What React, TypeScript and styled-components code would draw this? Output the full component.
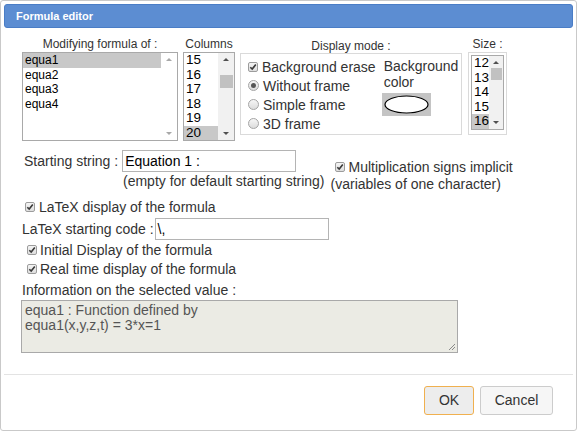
import React from 'react';
import styled, { createGlobalStyle, css } from 'styled-components';

// Formula editor dialog: formula list, columns/size pickers, display mode, options

const GlobalStyle = createGlobalStyle`
  html, body {
    margin: 0;
    padding: 0;
    background: #ffffff;
  }
  body {
    font-family: "Liberation Sans", Arial, sans-serif;
    color: #333333;
  }
  * { box-sizing: border-box; }
`;

const Dialog = styled.div`
  width: 577px;
  height: 431px;
  border: 1px solid #c9c9c9;
  border-radius: 3px;
  padding: 3px;
  background: #ffffff;
  display: flex;
  flex-direction: column;
`;

const TitleBar = styled.div`
  height: 24px;
  background: #5c8dd2;
  border: 1px solid #4a7dc6;
  border-radius: 3px;
  color: #ffffff;
  font-weight: 700;
  font-size: 11px;
  line-height: 22px;
  padding-left: 11px;
`;

const Body = styled.div`
  padding: 0 0 0 18px;
`;

const TopRow = styled.div`
  display: flex;
  align-items: flex-start;
  margin-top: 9px;
`;

const Group = styled.div<{ $gap?: number; $labelTop?: number }>`
  display: flex;
  flex-direction: column;
  align-items: center;
  margin-left: ${({ $gap }) => $gap ?? 0}px;
  padding-top: ${({ $labelTop }) => $labelTop ?? 0}px;
`;

const GroupLabel = styled.div<{ $lh?: number }>`
  font-size: 12px;
  line-height: ${({ $lh }) => $lh ?? 15}px;
  color: #333333;
  white-space: nowrap;
`;

const ListBox = styled.div<{ $w: number; $h: number }>`
  width: ${({ $w }) => $w}px;
  height: ${({ $h }) => $h}px;
  border: 1px solid #a9a9a9;
  background: #ffffff;
  display: flex;
  overflow: hidden;
`;

const ListItems = styled.div`
  flex: 1;
  display: flex;
  flex-direction: column;
`;

const ListItem = styled.div<{ $selected?: boolean; $size: number }>`
  height: 14.5px;
  line-height: 14.5px;
  font-size: ${({ $size }) => $size}px;
  color: #000000;
  padding-left: 2px;
  white-space: nowrap;
  background: ${({ $selected }) => ($selected ? '#c8c8c8' : 'transparent')};
`;

const ScrollBar = styled.div<{ $w: number; $active?: boolean }>`
  width: ${({ $w }) => $w}px;
  display: flex;
  flex-direction: column;
  align-items: center;
  justify-content: space-between;
  background: ${({ $active }) => ($active ? '#f1f1f1' : '#ffffff')};
  padding: 5px 0 5px;
`;

const Arrow = styled.span<{ $dir: 'up' | 'down'; $active?: boolean }>`
  width: 0;
  height: 0;
  border-left: 3px solid transparent;
  border-right: 3px solid transparent;
  ${({ $dir, $active }) =>
    $dir === 'up'
      ? css`border-bottom: 3px solid ${$active ? '#505050' : '#a8a8a8'};`
      : css`border-top: 3px solid ${$active ? '#505050' : '#a8a8a8'};`}
`;

const ScrollTrack = styled.div`
  flex: 1;
  width: 100%;
  position: relative;
`;

const Thumb = styled.div<{ $top: number; $h: number }>`
  position: absolute;
  left: 2px;
  right: 1px;
  top: ${({ $top }) => $top}px;
  height: ${({ $h }) => $h}px;
  background: #c1c1c1;
`;

const ModeBox = styled.div`
  width: 222px;
  height: 82px;
  border: 1px solid #dadada;
  padding: 3px 0 0 7px;
  display: flex;
`;

const ModeColumn = styled.div`
  display: flex;
  flex-direction: column;
`;

const ModeRow = styled.div`
  display: flex;
  align-items: center;
  height: 19px;
  font-size: 14px;
  color: #333333;
  white-space: nowrap;
`;

const ColorColumn = styled.div`
  display: flex;
  flex-direction: column;
  margin-left: 8px;
  padding-top: 1px;
  font-size: 14px;
  line-height: 16px;
  color: #333333;
`;

const Swatch = styled.div`
  width: 49px;
  height: 23px;
  margin-top: 3px;
  margin-left: -2px;
  background: #c4c4c4;
  display: flex;
  align-items: center;
  justify-content: center;
`;

const SizeFrame = styled.div`
  width: 39px;
  height: 83px;
  border: 1px solid #dadada;
  padding: 2px;
`;

const CheckBoxBox = styled.span<{ $gap?: number }>`
  width: 10px;
  height: 10px;
  flex: none;
  border: 1px solid #9c9c9c;
  border-radius: 2px;
  background: linear-gradient(#f4f4f4, #dedede);
  margin-right: ${({ $gap }) => $gap ?? 4}px;
  display: inline-flex;
  align-items: center;
  justify-content: center;
`;

const RadioCircle = styled.span<{ $on?: boolean }>`
  width: 11px;
  height: 11px;
  flex: none;
  border: 1px solid #a4a4a4;
  border-radius: 50%;
  background: linear-gradient(#f6f6f6, #dcdcdc);
  margin-right: 4px;
  display: inline-flex;
  align-items: center;
  justify-content: center;
  &::after {
    content: '';
    width: 5px;
    height: 5px;
    border-radius: 50%;
    background: ${({ $on }) => ($on ? '#555555' : 'transparent')};
  }
`;

const Text = styled.span`
  font-size: 14px;
  color: #333333;
  white-space: nowrap;
`;

const StartRow = styled.div`
  display: flex;
  margin-top: 9px;
  margin-left: 2px;
`;

const StartLeft = styled.div`
  display: flex;
  flex-direction: column;
`;

const InlineRow = styled.div<{ $mt?: number; $ml?: number; $h?: number }>`
  display: flex;
  align-items: center;
  margin-top: ${({ $mt }) => $mt ?? 0}px;
  margin-left: ${({ $ml }) => $ml ?? 0}px;
  height: ${({ $h }) => ($h ? `${$h}px` : 'auto')};
  font-size: 14px;
  color: #333333;
  white-space: nowrap;
`;

const TextInput = styled.div<{ $w: number; $ml: number }>`
  width: ${({ $w }) => $w}px;
  height: 22px;
  margin-left: ${({ $ml }) => $ml}px;
  border: 1px solid #b4b4b4;
  background: #ffffff;
  font-size: 14px;
  line-height: 20px;
  color: #000000;
  padding-left: 2px;
`;

const Hint = styled.div`
  margin-left: 99px;
  font-size: 14px;
  line-height: 18px;
  color: #333333;
  white-space: nowrap;
`;

const MultBlock = styled.div`
  display: flex;
  flex-direction: column;
  margin-left: 6px;
  margin-top: 8px;
  font-size: 14px;
  color: #333333;
  white-space: nowrap;
`;

const InfoLabel = styled.div`
  margin-top: 3px;
  font-size: 14px;
  line-height: 19px;
  color: #333333;
`;

const InfoArea = styled.div`
  position: relative;
  width: 437px;
  height: 53px;
  margin-left: -1px;
  border: 1px solid #a9a9a9;
  background: #ebebe4;
  padding: 2px 0 0 3px;
  font-size: 14px;
  line-height: 15px;
  color: #555555;
`;

const Grip = styled.svg`
  position: absolute;
  right: 1px;
  bottom: 1px;
`;

const Separator = styled.div`
  height: 1px;
  background: #e3e3e3;
  margin-top: 21px;
`;

const ButtonRow = styled.div`
  display: flex;
  justify-content: flex-end;
  gap: 6px;
  margin-top: 11px;
  padding-right: 20px;
`;

const Button = styled.div<{ $primary?: boolean; $w: number }>`
  width: ${({ $w }) => $w}px;
  height: 29px;
  border: 1px solid ${({ $primary }) => ($primary ? '#f0b04f' : '#cccccc')};
  border-radius: 3px;
  background: ${({ $primary }) => ($primary ? '#ededed' : '#f6f6f6')};
  font-size: 14px;
  line-height: 27px;
  text-align: center;
  color: #333333;
`;

function CheckBox({ gap }: { gap?: number }) {
  return (
    <CheckBoxBox $gap={gap}>
      <svg width="8" height="8" viewBox="0 0 8 8">
        <path d="M1.3 4.2 L3.2 6.1 L6.8 1.6" fill="none" stroke="#3a3a3a" strokeWidth="1.6" />
      </svg>
    </CheckBoxBox>
  );
}

const formulas = ['equa1', 'equa2', 'equa3', 'equa4'];
const columns = ['15', '16', '17', '18', '19', '20'];
const sizes = ['12', '13', '14', '15', '16'];

export default function App() {
  return (
    <>
      <GlobalStyle />
      <Dialog>
        <TitleBar>Formula editor</TitleBar>
        <Body>
          <TopRow>
            <Group>
              <GroupLabel>Modifying formula of :</GroupLabel>
              <ListBox $w={156} $h={89}>
                <ListItems>
                  {formulas.map((f, i) => (
                    <ListItem key={f} $size={12} $selected={i === 0}>
                      {f}
                    </ListItem>
                  ))}
                </ListItems>
                <ScrollBar $w={16}>
                  <Arrow $dir="up" />
                  <Arrow $dir="down" />
                </ScrollBar>
              </ListBox>
            </Group>

            <Group $gap={5}>
              <GroupLabel>Columns</GroupLabel>
              <ListBox $w={52} $h={89}>
                <ListItems>
                  {columns.map((c) => (
                    <ListItem key={c} $size={13.5} $selected={c === '20'}>
                      {c}
                    </ListItem>
                  ))}
                </ListItems>
                <ScrollBar $w={16} $active>
                  <Arrow $dir="up" $active />
                  <ScrollTrack>
                    <Thumb $top={14} $h={13} />
                  </ScrollTrack>
                  <Arrow $dir="down" $active />
                </ScrollBar>
              </ListBox>
            </Group>

            <Group $gap={5} $labelTop={2}>
              <GroupLabel $lh={14}>Display mode :</GroupLabel>
              <ModeBox>
                <ModeColumn>
                  <ModeRow>
                    <CheckBox />
                    Background erase
                  </ModeRow>
                  <ModeRow>
                    <RadioCircle $on />
                    Without frame
                  </ModeRow>
                  <ModeRow>
                    <RadioCircle />
                    Simple frame
                  </ModeRow>
                  <ModeRow>
                    <RadioCircle />
                    3D frame
                  </ModeRow>
                </ModeColumn>
                <ColorColumn>
                  <span>Background</span>
                  <span>color</span>
                  <Swatch>
                    <svg width="45" height="19" viewBox="0 0 45 19">
                      <ellipse cx="22.5" cy="9.5" rx="21.5" ry="8.5" fill="#ffffff" stroke="#000000" strokeWidth="1.2" />
                    </svg>
                  </Swatch>
                </ColorColumn>
              </ModeBox>
            </Group>

            <Group $gap={6}>
              <GroupLabel>Size :</GroupLabel>
              <SizeFrame>
                <ListBox $w={33} $h={75}>
                  <ListItems>
                    {sizes.map((s) => (
                      <ListItem key={s} $size={13.5} $selected={s === '16'}>
                        {s}
                      </ListItem>
                    ))}
                  </ListItems>
                  <ScrollBar $w={15} $active>
                    <Arrow $dir="up" $active />
                    <ScrollTrack>
                      <Thumb $top={4} $h={12} />
                    </ScrollTrack>
                    <Arrow $dir="down" $active />
                  </ScrollBar>
                </ListBox>
              </SizeFrame>
            </Group>
          </TopRow>

          <StartRow>
            <StartLeft>
              <InlineRow>
                Starting string :
                <TextInput $w={174} $ml={4}>Equation 1 :</TextInput>
              </InlineRow>
              <Hint>(empty for default starting string)</Hint>
            </StartLeft>
            <MultBlock>
              <InlineRow $ml={4} $h={17}>
                <CheckBox />
                Multiplication signs implicit
              </InlineRow>
              <InlineRow $h={18}>(variables of one character)</InlineRow>
            </MultBlock>
          </StartRow>

          <InlineRow $mt={5} $ml={3} $h={18}>
            <CheckBox />
            <Text>LaTeX display of the formula</Text>
          </InlineRow>

          <InlineRow $mt={2}>
            LaTeX starting code :
            <TextInput $w={174} $ml={1}>\,</TextInput>
          </InlineRow>

          <InlineRow $ml={5} $h={19}>
            <CheckBox gap={3} />
            <Text>Initial Display of the formula</Text>
          </InlineRow>
          <InlineRow $ml={5} $h={19}>
            <CheckBox gap={3} />
            <Text>Real time display of the formula</Text>
          </InlineRow>

          <InfoLabel>Information on the selected value :</InfoLabel>
          <InfoArea>
            equa1 : Function defined by
            <br />
            equa1(x,y,z,t) = 3*x=1
            <Grip width="10" height="10" viewBox="0 0 10 10">
              <path d="M9 3 L3 9 M9 6 L6 9" stroke="#8a8a8a" strokeWidth="1" />
            </Grip>
          </InfoArea>
        </Body>
        <Separator />
        <ButtonRow>
          <Button $primary $w={50}>OK</Button>
          <Button $w={73}>Cancel</Button>
        </ButtonRow>
      </Dialog>
    </>
  );
}
